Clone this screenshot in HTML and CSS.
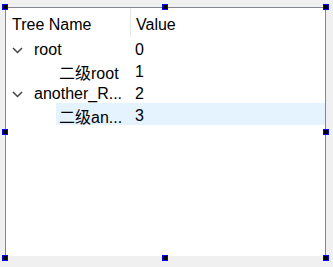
FILE: index.html
```html
<!DOCTYPE html>
<html lang="zh">
  <head>
    <meta charset="UTF-8" />
    <title>Tree Widget</title>
    <link rel="stylesheet" href="styles.css">
  </head>
  <body>
    <div class="tree">
      <div class="header">
        <div class="header-cell name-col">Tree Name</div>
        <div class="header-cell value-col">Value</div>
      </div>

      <div class="row">
        <div class="branch">
          <svg class="chevron" width="11" height="7" viewBox="0 0 11 7">
            <polyline points="1,1 5.5,5.5 10,1" />
          </svg>
        </div>
        <div class="item top">
          <span class="name">root</span>
          <span class="value">0</span>
        </div>
      </div>

      <div class="row">
        <div class="branch child"></div>
        <div class="item sub">
          <span class="name">二级root</span>
          <span class="value">1</span>
        </div>
      </div>

      <div class="row">
        <div class="branch">
          <svg class="chevron" width="11" height="7" viewBox="0 0 11 7">
            <polyline points="1,1 5.5,5.5 10,1" />
          </svg>
        </div>
        <div class="item top">
          <span class="name">another_R...</span>
          <span class="value">2</span>
        </div>
      </div>

      <div class="row">
        <div class="branch child"></div>
        <div class="item sub selected">
          <span class="name">二级an...</span>
          <span class="value">3</span>
        </div>
      </div>

      <!-- selection handles -->
      <span class="handle h-tl"></span>
      <span class="handle h-tm"></span>
      <span class="handle h-tr"></span>
      <span class="handle h-ml"></span>
      <span class="handle h-mr"></span>
      <span class="handle h-bl"></span>
      <span class="handle h-bm"></span>
      <span class="handle h-br"></span>
    </div>
  </body>
</html>
```

FILE: styles.css
```css
body {
  margin: 0;
  padding: 0;
  width: 333px;
  height: 267px;
  background-color: #f0f0f0;
  font-family: 'Liberation Sans', 'Noto Sans CJK SC', sans-serif;
  font-size: 16px;
  color: #000;
  overflow: hidden;
}

.tree {
  position: relative;
  box-sizing: border-box;
  width: 321px;
  height: 249px;
  margin: 7px 0 0 5px;
  background-color: #fff;
  border: 1px solid #828790;
  border-bottom: none;
}

.header {
  display: flex;
  height: 29px;
}

.header-cell {
  display: flex;
  align-items: center;
  box-sizing: border-box;
  padding: 5px 0 0 6px;
  white-space: nowrap;
}

.header-cell.name-col {
  width: 125px;
  border-right: 1px solid #e5e5e5;
}

.header-cell.value-col {
  padding-left: 5px;
}

.row {
  display: flex;
  height: 22px;
}

.branch {
  width: 25px;
  flex-shrink: 0;
  display: flex;
  align-items: center;
}

.branch.child {
  width: 50px;
}

.chevron {
  margin-left: 6px;
  margin-top: 4px;
}

.chevron polyline {
  fill: none;
  stroke: #444;
  stroke-width: 1.5;
}

.item {
  flex: 1;
  display: flex;
  align-items: center;
  box-sizing: border-box;
  padding-top: 4px;
  white-space: nowrap;
}

.item.selected {
  background-color: #e5f3ff;
}

.name {
  box-sizing: border-box;
  padding-left: 3px;
  overflow: hidden;
}

.item.top .name {
  width: 99px;
}

.item.sub .name {
  width: 74px;
}

.value {
  padding-left: 5px;
}

.handle {
  position: absolute;
  width: 4px;
  height: 4px;
  background-color: #000;
  border: 1px solid #0000ff;
}

.h-tl { left: -4px; top: -4px; }
.h-tm { left: 156px; top: -4px; }
.h-tr { left: 317px; top: -4px; }
.h-ml { left: -4px; top: 121px; }
.h-mr { left: 317px; top: 121px; }
.h-bl { left: -4px; top: 247px; }
.h-bm { left: 156px; top: 247px; }
.h-br { left: 317px; top: 247px; }
```
